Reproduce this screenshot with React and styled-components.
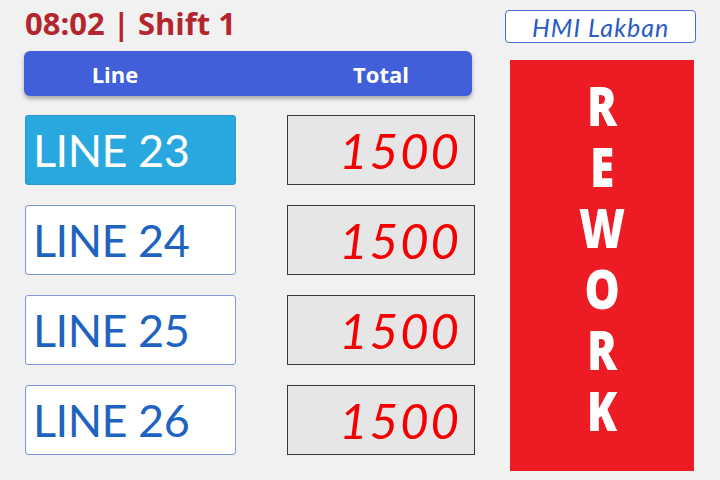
import React from 'react';
import styled, { createGlobalStyle } from 'styled-components';

const GlobalStyle = createGlobalStyle`
  html, body {
    margin: 0;
    padding: 0;
    background: #f1f1f1;
  }
  * {
    box-sizing: border-box;
  }
`;

const Page = styled.div`
  width: 720px;
  height: 480px;
  background: #f1f1f1;
  display: flex;
  gap: 27px;
  padding: 0 24px;
  overflow: hidden;
`;

const LeftColumn = styled.div`
  width: 455px;
  display: flex;
  flex-direction: column;
`;

const Title = styled.h1`
  margin: 0;
  padding-top: 8px;
  padding-left: 1px;
  font-family: "Open Sans", "Liberation Sans", sans-serif;
  font-weight: 700;
  font-size: 31px;
  line-height: 31px;
  color: #b3262d;
`;

const HeaderBar = styled.div`
  margin-top: 12px;
  width: 448px;
  height: 45px;
  background: #405fd8;
  border-radius: 6px;
  box-shadow: 0 3px 4px rgba(0, 0, 0, 0.3);
  display: grid;
  grid-template-columns: 182px 1fr;
  align-items: center;
  font-family: "Open Sans", "Liberation Sans", sans-serif;
  font-weight: 700;
  font-size: 22px;
  color: #ffffff;
`;

const HeaderCell = styled.div`
  text-align: center;
  padding-left: ${(p) => (p.$offset ? '84px' : '0')};
`;

const RowList = styled.div`
  margin-top: 19px;
  display: flex;
  flex-direction: column;
  gap: 20px;
`;

const Row = styled.div`
  display: grid;
  grid-template-columns: 211px 188px;
  column-gap: 51px;
  height: 70px;
  margin-left: 1px;
`;

const LineBox = styled.div`
  display: flex;
  align-items: center;
  padding-left: 7px;
  border-radius: 3px;
  border: 1px solid ${(p) => (p.$active ? '#2a96d6' : '#7f97db')};
  background: ${(p) => (p.$active ? '#29a8e0' : '#ffffff')};
  color: ${(p) => (p.$active ? '#ffffff' : '#1e63bf')};
  font-family: Lato, "Noto Sans", sans-serif;
  font-size: 45px;
  letter-spacing: -0.5px;
`;

const TotalBox = styled.div`
  display: flex;
  align-items: center;
  justify-content: flex-end;
  padding-right: 13px;
  border: 1px solid #383838;
  background: #e6e6e6;
  color: #f40000;
  font-family: Lato, "Noto Sans", sans-serif;
  font-style: italic;
  font-size: 49px;
  letter-spacing: 2px;
`;

const RightColumn = styled.div`
  width: 191px;
  display: flex;
  flex-direction: column;
`;

const Brand = styled.div`
  margin-top: 10px;
  height: 33px;
  background: #ffffff;
  border: 1px solid #4a6bd0;
  border-radius: 4px;
  display: flex;
  align-items: center;
  justify-content: center;
  font-family: Lato, "Noto Sans", sans-serif;
  font-style: italic;
  font-size: 25px;
  letter-spacing: 1px;
  color: #2a5cc4;
`;

const ReworkPanel = styled.div`
  margin: 17px 2px 0 5px;
  height: 411px;
  background: #ed1c24;
  display: flex;
  justify-content: center;
  padding-top: 15px;
`;

const ReworkText = styled.div`
  white-space: pre-line;
  text-align: center;
  font-family: "Open Sans", "Liberation Sans", sans-serif;
  font-weight: 800;
  font-size: 54px;
  line-height: 61px;
  color: #ffffff;
  transform: scaleX(0.82);
`;

const lines = [
  { name: 'LINE 23', total: 1500, active: true },
  { name: 'LINE 24', total: 1500 },
  { name: 'LINE 25', total: 1500 },
  { name: 'LINE 26', total: 1500 },
];

const App = () => {
  return (
    <>
      <GlobalStyle />
      <Page>
        <LeftColumn>
          <Title>08:02 | Shift 1</Title>
          <HeaderBar>
            <HeaderCell>Line</HeaderCell>
            <HeaderCell $offset>Total</HeaderCell>
          </HeaderBar>
          <RowList>
            {lines.map((line) => (
              <Row key={line.name}>
                <LineBox $active={line.active}>{line.name}</LineBox>
                <TotalBox>{line.total}</TotalBox>
              </Row>
            ))}
          </RowList>
        </LeftColumn>
        <RightColumn>
          <Brand>HMI Lakban</Brand>
          <ReworkPanel>
            <ReworkText>{'REWORK'.split('').join('\n')}</ReworkText>
          </ReworkPanel>
        </RightColumn>
      </Page>
    </>
  );
};

export default App;
